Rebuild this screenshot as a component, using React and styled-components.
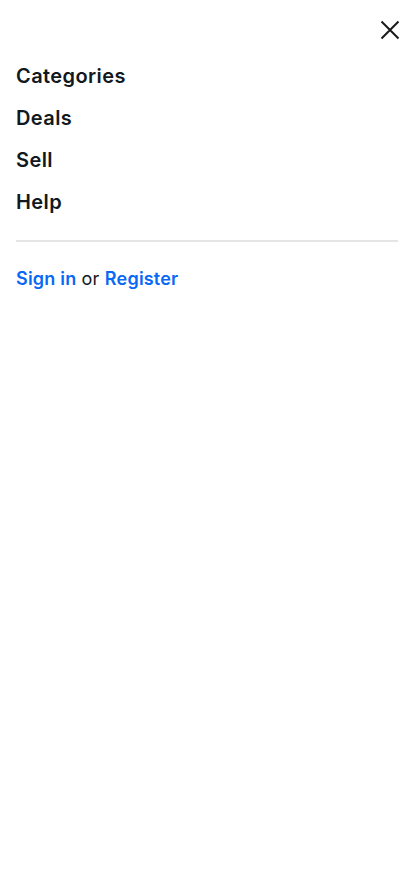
import React from "react";
import styled, { createGlobalStyle } from "styled-components";

const Global = createGlobalStyle`
  html, body { margin: 0; padding: 0; background: #fff; }
  body { font-family: Inter, "Noto Sans", Arial, sans-serif; color: #191919; }
  * { box-sizing: border-box; }
`;

const Panel = styled.div`
  width: 414px;
  min-height: 896px;
  background: #fff;
  padding: 0 16px;
`;

const Header = styled.div`
  height: 55px;
  display: flex;
  justify-content: flex-end;
  align-items: center;
  padding-top: 4px;
`;

const CloseButton = styled.button`
  width: 24px;
  height: 24px;
  padding: 0;
  margin-right: -4px;
  border: 0;
  background: none;
  display: flex;
  align-items: center;
  justify-content: center;
  cursor: pointer;
  color: #191919;
`;

const NavList = styled.ul`
  list-style: none;
  margin: 0;
  padding: 0;
`;

const NavItem = styled.li`
  height: 42px;
  display: flex;
  align-items: center;
  font-size: 20px;
  font-weight: 600;
  letter-spacing: 0.4px;
  color: #111820;
`;

const Divider = styled.hr`
  margin: 17px 0 0;
  border: 0;
  height: 2px;
  background: #e5e5e5;
`;

const SignLine = styled.p`
  margin: 25px 0 0;
  font-size: 18px;
  line-height: 24px;
  letter-spacing: 0.2px;
  color: #111820;
`;

const Link = styled.a`
  color: #0968f6;
  font-weight: 600;
  text-decoration: none;
`;

export default function App() {
  return (
    <>
      <Global />
      <Panel>
        <Header>
          <CloseButton aria-label="Close">
            <svg width="24" height="24" viewBox="0 0 24 24" fill="none">
              <path d="M3.5 3.5 L20.5 20.5 M20.5 3.5 L3.5 20.5" stroke="currentColor" strokeWidth="2" strokeLinecap="butt" />
            </svg>
          </CloseButton>
        </Header>
        <NavList>
          <NavItem>Categories</NavItem>
          <NavItem>Deals</NavItem>
          <NavItem>Sell</NavItem>
          <NavItem>Help</NavItem>
        </NavList>
        <Divider />
        <SignLine>
          <Link href="#">Sign in</Link> or <Link href="#">Register</Link>
        </SignLine>
      </Panel>
    </>
  );
}
